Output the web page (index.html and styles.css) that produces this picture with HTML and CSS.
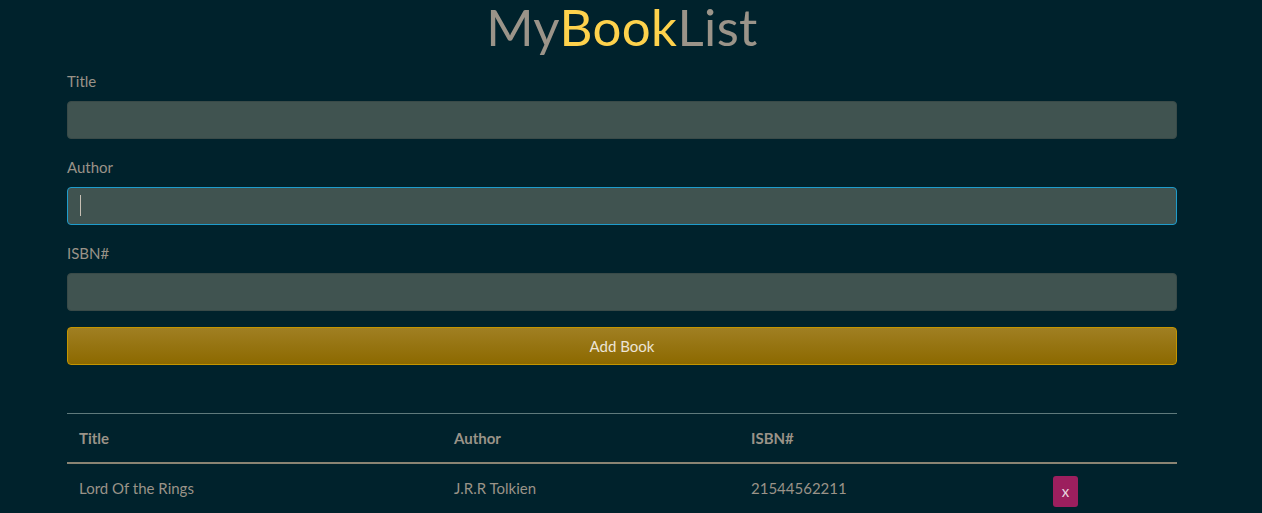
FILE: index.html
```html
<!DOCTYPE html>
<html lang="en">
<head>
<meta charset="utf-8">
<title>MyBookList</title>
<link rel="stylesheet" href="styles.css">
</head>
<body>
<div class="container">
  <h1 class="brand">My<span class="accent">Book</span>List</h1>
  <form class="book-form">
    <div class="form-group">
      <label for="title">Title</label>
      <input type="text" id="title" class="form-control">
    </div>
    <div class="form-group">
      <label for="author">Author</label>
      <div class="input-wrap">
        <input type="text" id="author" class="form-control is-focused">
        <span class="caret"></span>
      </div>
    </div>
    <div class="form-group">
      <label for="isbn">ISBN#</label>
      <input type="text" id="isbn" class="form-control">
    </div>
    <button type="button" class="btn-add">Add Book</button>
  </form>
  <table class="book-table">
    <thead>
      <tr>
        <th class="col-title">Title</th>
        <th class="col-author">Author</th>
        <th class="col-isbn">ISBN#</th>
        <th class="col-action"></th>
      </tr>
    </thead>
    <tbody>
      <tr>
        <td>Lord Of the Rings</td>
        <td>J.R.R Tolkien</td>
        <td>21544562211</td>
        <td><a class="btn-delete">x</a></td>
      </tr>
    </tbody>
  </table>
</div>
</body>
</html>
```

FILE: styles.css
```css
* { box-sizing: border-box; }
html { background: #00222c; }
body {
  margin: 0;
  padding-right: 18px;
  background: #00222c;
  color: #9a9388;
  font-family: Lato, "Open Sans", sans-serif;
  font-size: 15px;
  line-height: 24px;
}
.container {
  width: 1140px;
  margin: 0 auto;
  padding: 0 15px;
}
.brand {
  margin: 0 0 9px;
  height: 60px;
  text-align: center;
  font-weight: 400;
  font-size: 51px;
  line-height: 54px;
  letter-spacing: 0.4px;
  color: #9b9489;
}
.accent { color: #fed24c; }
.form-group { margin-bottom: 16px; }
label {
  display: block;
  margin-bottom: 8px;
  line-height: 24px;
}
.form-control {
  display: block;
  width: 100%;
  height: 38px;
  background: #405350;
  border: 1px solid #394a48;
  border-radius: 4px;
  color: #ddd;
  font: inherit;
  padding: 6px 12px;
  outline: none;
}
.form-control.is-focused { border-color: #1e9ccc; }
.input-wrap { position: relative; }
.caret {
  position: absolute;
  left: 13px;
  top: 8px;
  width: 1px;
  height: 21px;
  background: #c8c0b4;
}
.btn-add {
  display: block;
  width: 100%;
  height: 38px;
  border: 1px solid #c49500;
  border-radius: 4px;
  background: linear-gradient(#a07f22, #8c6900);
  color: #ece4d6;
  font: inherit;
  font-size: 15px;
}
.book-table {
  width: 100%;
  margin-top: 48px;
  border-collapse: collapse;
}
.book-table th, .book-table td {
  text-align: left;
  padding: 12px;
  line-height: 24px;
  vertical-align: top;
}
.book-table th {
  font-weight: 700;
  border-top: 1px solid #5f7a7c;
  border-bottom: 2px solid #8a8473;
}
.col-title { width: 375px; }
.col-author { width: 297px; }
.col-isbn { width: 302px; }
.btn-delete {
  display: inline-block;
  vertical-align: top;
  width: 25px;
  height: 31px;
  line-height: 31px;
  text-align: center;
  background: #9c1f5e;
  color: #e8d6df;
  border-radius: 3px;
  font-size: 15px;
}
```
